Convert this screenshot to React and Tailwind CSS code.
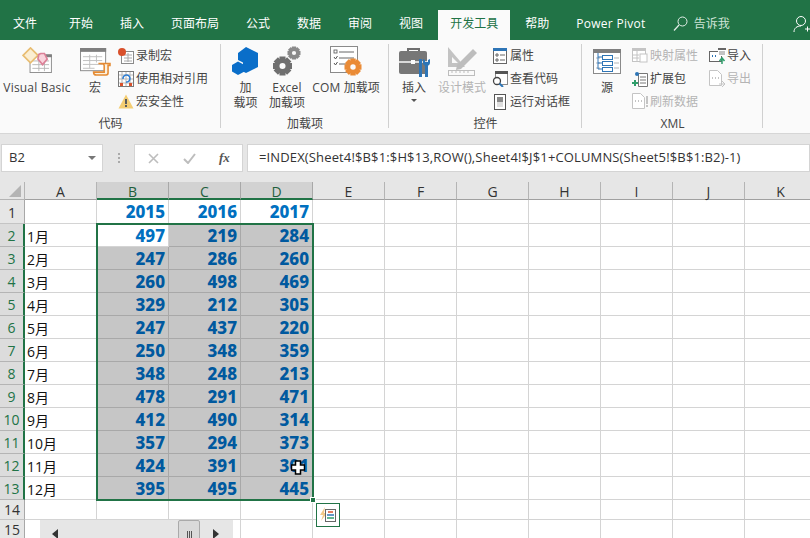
const FONT = "font-['Open_Sans','Noto_Sans_CJK_SC',sans-serif]"

const tabs = ['开始', '插入', '页面布局', '公式', '数据', '审阅', '视图']
const columns = ['A', 'B', 'C', 'D', 'E', 'F', 'G', 'H', 'I', 'J', 'K']
const months = ['1月', '2月', '3月', '4月', '5月', '6月', '7月', '8月', '9月', '10月', '11月', '12月']
const data = [
  [497, 219, 284], [247, 286, 260], [260, 498, 469], [329, 212, 305],
  [247, 437, 220], [250, 348, 359], [348, 248, 213], [478, 291, 471],
  [412, 490, 314], [357, 294, 373], [424, 391, 301], [395, 495, 445],
]

function VbaIcon() {
  return (
    <svg className="mb-[3px]" width="30" height="26" viewBox="0 0 32 28">
      <rect x="8.5" y="8.5" width="23" height="19" fill="#fff" stroke="#8a8a8a" />
      <path d="M8 8h24v3H8z" fill="#7f7f7f" />
      <path d="M11 15h18M11 19h18M11 23h18M18 12v14M24 12v14" stroke="#b5b5b5" />
      <path d="M1 9l8-8 8 8-8 8z" fill="#fbeed2" stroke="#e8bd72" strokeWidth="1.8" />
      <path d="M18 8l-1 5 5 6 5-6-3-6h-4z" fill="#f9d3dc" stroke="#dc8198" strokeWidth="1.8" />
    </svg>
  )
}

function MacroIcon() {
  return (
    <svg width="31" height="28" viewBox="0 0 32 29">
      <rect x="0.5" y="0.5" width="26" height="23" fill="#fff" stroke="#8a8a8a" />
      <rect x="0" y="0" width="27" height="4" fill="#7f7f7f" />
      <path d="M3 9h20M3 13h20M3 17h20M3 21h12M10 7v14M17 7v8" stroke="#c0c0c0" />
      <path d="M19 16h12v2h-2v8c0 1-1 2-2 2H17c-2 0-3-1-3-3h11v-7c0-1-2-2-6-2z" fill="#fbf1df" stroke="#e58a32" strokeWidth="1.600" />
    </svg>
  )
}

function RecordIcon() {
  return (
    <svg width="16" height="16" viewBox="0 0 16 16">
      <rect x="3.5" y="3.5" width="12" height="12" fill="#fff" stroke="#8a8a8a" />
      <path d="M6 7h8M6 10h8M6 13h8M10 5v9" stroke="#aaa" />
      <circle cx="4" cy="4" r="4" fill="#d9512c" />
    </svg>
  )
}

function RelativeIcon() {
  return (
    <svg width="16" height="16" viewBox="0 0 16 16">
      <rect x="0.5" y="0.5" width="15" height="15" fill="#fff" stroke="#7a7a7a" />
      <path d="M1 4h14M1 8h14M1 12h14M4 1v14M8 1v14M12 1v14" stroke="#b5b5b5" />
      <path d="M2 12h3v3H2zM11 12h3v3h-3z" fill="#d9512c" />
      <path d="M5 8a3.5 3.5 0 1 1 3 3" fill="none" stroke="#2b7cd3" strokeWidth="1.5" />
    </svg>
  )
}

function WarnIcon() {
  return (
    <svg width="16" height="15" viewBox="0 0 16 15">
      <path d="M8 0.5l7.5 14H0.5z" fill="#f4cd72" />
      <path d="M7 5h2v5H7zM7 11h2v2H7z" fill="#5c5c5c" />
    </svg>
  )
}

function CubeIcon() {
  return (
    <svg className="mb-px" width="27" height="28" viewBox="0 0 27 28">
      <path d="M14 0l12 6v14l-12 6-3-1.500v-9l-5-2.500V6z" fill="#0a6ec9" />
      <path d="M6 14.500l6.500 3.500v6.500L6 28 0 24.500V18z" fill="#0a6ec9" />
    </svg>
  )
}

function Gear({ x, y, r, color = '#6f6f6f' }) {
  const teeth = [0, 45, 90, 135].map((a) => (
    <rect key={a} x={x - r * 0.32} y={y - r} width={r * 0.64} height={r * 2} fill={color} transform={`rotate(${a} ${x} ${y})`} />
  ))
  return (
    <g>
      {teeth}
      <circle cx={x} cy={y} r={r * 0.74} fill={color} />
      <circle cx={x} cy={y} r={r * 0.32} fill="#fafafa" />
    </g>
  )
}

function GearsIcon() {
  return (
    <svg width="28" height="30" viewBox="0 0 28 30">
      <Gear x={9.500} y={20} r={9.500} />
      <Gear x={21} y={7} r={6.500} color="#8a8a8a" />
    </svg>
  )
}

function ComIcon() {
  return (
    <svg width="32" height="30" viewBox="0 0 32 30">
      <rect x="0.5" y="0.5" width="27" height="26" fill="#fff" stroke="#8a8a8a" />
      <path d="M9 6h15M9 12h15M9 18h8" stroke="#666" />
      <rect x="4" y="4" width="3" height="3" fill="none" stroke="#555" strokeWidth="0.8" />
      <path d="M4 11l1.500 2 2-3M4 17l1.500 2 2-3" fill="none" stroke="#555" />
      <Gear x={23} y={21} r={8.500} color="#ea8b36" />
    </svg>
  )
}

function ToolboxIcon() {
  return (
    <svg className="-mb-[2px]" width="31" height="31" viewBox="0 0 31 31">
      <path d="M9 5V2h11v3" fill="none" stroke="#6f6f6f" strokeWidth="2" />
      <rect x="0" y="4" width="28" height="23" rx="2" fill="#777" />
      <path d="M0 15h28" stroke="#fafafa" strokeWidth="1.500" />
      <rect x="12" y="13" width="4" height="4" fill="#fafafa" />
      <path d="M20 17h3v13h-3z" fill="#2e75b6" />
      <path d="M26 18h3v12h-3z" fill="#2e75b6" />
      <path d="M24 12v4c0 2 2 3 3.500 3s3.500-1 3.500-3v-4l-2 1v2h-3v-2z" fill="#2e75b6" />
      <path d="M20 12h3v6h-3z" fill="#2e75b6" />
    </svg>
  )
}

function DesignIcon() {
  return (
    <svg width="31" height="29" viewBox="0 0 31 29">
      <path d="M1 0l17 20H1zM5 10v6h6z" fill="#c3c3c3" fillRule="evenodd" />
      <path d="M10 18L26 2l4 4-16 16-5 1z" fill="#bdbdbd" />
      <rect x="1.500" y="23.500" width="26" height="5" fill="none" stroke="#bdbdbd" />
      <path d="M5 24v2M9 24v2M13 24v2M17 24v2M21 24v2" stroke="#bdbdbd" />
    </svg>
  )
}

function PropsIcon() {
  return (
    <svg width="16" height="16" viewBox="0 0 16 16">
      <rect x="1.500" y="0.5" width="13" height="15" fill="#fff" stroke="#666" />
      <rect x="1" y="0" width="14" height="3" fill="#2e75b6" />
      <path d="M4 6h2v2H4zM4 11h2v2H4z" fill="none" stroke="#666" />
      <path d="M8 7h5M8 12h5" stroke="#666" />
    </svg>
  )
}

function CodeIcon() {
  return (
    <svg width="16" height="16" viewBox="0 0 16 16">
      <rect x="3.500" y="0.5" width="12" height="13" fill="#fff" stroke="#8a8a8a" />
      <rect x="3" y="0" width="13" height="3" fill="#555" />
      <circle cx="5" cy="10" r="3.500" fill="#fff" stroke="#444" strokeWidth="1.300" />
      <path d="M7.500 12.500L11 16" stroke="#2e75b6" strokeWidth="2" />
    </svg>
  )
}

function DialogIcon() {
  return (
    <svg width="16" height="16" viewBox="0 0 16 16">
      <rect x="2.500" y="0.500" width="11" height="15" fill="#fff" stroke="#555" />
      <rect x="5" y="3" width="6" height="5" fill="#888" />
      <rect x="5" y="8" width="6" height="5" fill="#ddd" />
    </svg>
  )
}

function SourceIcon() {
  return (
    <svg className="mb-[2px]" width="28" height="25" viewBox="0 0 28 25">
      <rect x="0.5" y="0.5" width="27" height="24" fill="#fff" stroke="#8a8a8a" />
      <rect x="0" y="0" width="28" height="4" fill="#7f7f7f" />
      <path d="M3 9h4M3 14h4M3 19h4M21 9h5M21 14h5M21 19h5" stroke="#b5b5b5" />
      <path d="M5 4v16h4M5 8h4M5 14h4" fill="none" stroke="#2e75b6" />
      <rect x="9.500" y="6.500" width="10" height="4" fill="#fff" stroke="#2e75b6" />
      <rect x="9.500" y="12.500" width="10" height="4" fill="#fff" stroke="#2e75b6" />
      <rect x="9.500" y="18.500" width="10" height="4" fill="#fff" stroke="#2e75b6" />
    </svg>
  )
}

function MapIcon() {
  return (
    <svg width="16" height="15" viewBox="0 0 16 15">
      <rect x="0.500" y="0.500" width="13" height="13" fill="#fff" stroke="#c4c4c4" />
      <rect x="0" y="0" width="14" height="3" fill="#c4c4c4" />
      <path d="M1 7h6M1 10h6M5 3v10" stroke="#c4c4c4" />
      <rect x="8" y="6" width="7" height="8" fill="#fff" stroke="#c4c4c4" />
    </svg>
  )
}

function ExpandIcon() {
  return (
    <svg width="16" height="16" viewBox="0 0 16 16">
      <path d="M6.500 2.500h9v13h-9z" fill="#fff" stroke="#777" />
      <path d="M8 6h6M8 9h6M8 12h6" stroke="#777" />
      <circle cx="5" cy="3" r="2" fill="#2e75b6" />
      <path d="M0 12h6M3 9v6" stroke="#2f9e6b" strokeWidth="2" />
    </svg>
  )
}

function XmlDoc({ color = '#c4c4c4', bang, arrow }) {
  return (
    <svg width="18" height="17" viewBox="0 0 18 17">
      <path d="M1.500 0.500h8l4 4v11h-12z" fill="#fff" stroke={color} />
      <path d="M4 8h1M7 8h1M10 8h1" stroke={color} strokeWidth="2" />
      {bang && <path d="M15 3h2v8h-2zM15 12h2v2h-2z" fill={color} />}
      {arrow && <path d="M11 14h5M14 11l3 3-3 3" fill="none" stroke={color} />}
    </svg>
  )
}

function ImportIcon() {
  return (
    <svg width="17" height="16" viewBox="0 0 17 16">
      <rect x="0.500" y="3.500" width="12" height="10" fill="#fff" stroke="#666" />
      <path d="M9 0h8v8H9z" fill="#fff" />
      <path d="M9 0h8v2H9z" fill="#666" />
      <path d="M10 4h6M10 6h6" stroke="#888" />
      <path d="M3 8h1M6 8h1" stroke="#2e75b6" strokeWidth="2" />
      <path d="M13 16v-5M10.500 13l2.500-3 2.500 3" fill="none" stroke="#2f9e6b" strokeWidth="1.500" />
    </svg>
  )
}

function BigButton({ width, label, children, disabled, caret }) {
  return (
    <div className="flex flex-col items-center shrink-0" style={{ width }}>
      <div className="h-[33px] flex items-end justify-center">{children}</div>
      <div className={`mt-[4px] text-center leading-[15px] whitespace-pre ${disabled ? 'text-[#b4b4b4]' : ''}`}>{label}</div>
      {caret && <div className="mt-[4px] w-0 h-0 border-x-[3px] border-x-transparent border-t-[3px] border-t-[#555]" />}
    </div>
  )
}

function SmallRow({ icon, label, disabled }) {
  return (
    <div className="h-[23px] flex items-center whitespace-nowrap">
      <div className="w-[18px] flex justify-center shrink-0">{icon}</div>
      <span className={`ml-[1px] ${disabled ? 'text-[#b4b4b4]' : ''}`}>{label}</span>
    </div>
  )
}

function Group({ width, label, children }) {
  return (
    <div className="relative h-full flex flex-col shrink-0" style={{ width }}>
      <div className="flex h-[74px] pt-[3px]">{children}</div>
      <div className="text-center leading-[16px] mt-[2px]">{label}</div>
      <div className="absolute right-0 top-[4px] h-[84px] w-px bg-[#d0d0d0]" />
    </div>
  )
}

function Ribbon() {
  return (
    <div className="h-[94px] bg-[#fafafa] border-b border-[#d6d6d6] flex text-[12px] text-[#444]">
      <Group width={221} label="代码">
        <BigButton width={74} label={<span className="tracking-[0.2px]">Visual Basic</span>}><VbaIcon /></BigButton>
        <BigButton width={42} label="宏"><MacroIcon /></BigButton>
        <div className="flex flex-col ml-[1px] pt-[1px]">
          <SmallRow icon={<RecordIcon />} label="录制宏" />
          <SmallRow icon={<RelativeIcon />} label="使用相对引用" />
          <SmallRow icon={<WarnIcon />} label="宏安全性" />
        </div>
      </Group>
      <Group width={168} label="加载项">
        <div className="w-[1px]" />
        <BigButton width={47} label={'加\n载项'}><CubeIcon /></BigButton>
        <BigButton width={36} label={<><span className="tracking-[0.2px]">Excel</span>{'\n加载项'}</>}><GearsIcon /></BigButton>
        <div className="w-[5px]" />
        <BigButton width={72} label={<><span className="tracking-[0.2px]">COM</span> 加载项</>}><ComIcon /></BigButton>
      </Group>
      <Group width={193} label="控件">
        <div className="w-[7px]" />
        <BigButton width={36} label="插入" caret><ToolboxIcon /></BigButton>
        <div className="w-[6px]" />
        <BigButton width={48} label="设计模式" disabled><DesignIcon /></BigButton>
        <div className="flex flex-col ml-[5px] pt-[1px]">
          <SmallRow icon={<PropsIcon />} label="属性" />
          <SmallRow icon={<CodeIcon />} label="查看代码" />
          <SmallRow icon={<DialogIcon />} label="运行对话框" />
        </div>
      </Group>
      <Group width={181} label="XML">
        <div className="w-[7px]" />
        <BigButton width={36} label="源"><SourceIcon /></BigButton>
        <div className="flex flex-col ml-[6px] pt-[1px]">
          <SmallRow icon={<MapIcon />} label="映射属性" disabled />
          <SmallRow icon={<ExpandIcon />} label="扩展包" />
          <SmallRow icon={<XmlDoc bang />} label="刷新数据" disabled />
        </div>
        <div className="flex flex-col ml-[10px] pt-[1px]">
          <SmallRow icon={<ImportIcon />} label="导入" />
          <SmallRow icon={<XmlDoc arrow />} label="导出" disabled />
        </div>
      </Group>
    </div>
  )
}

function FormulaBar() {
  return (
    <div className="h-[48px] bg-[#e6e6e6] flex items-start pt-[10px] pl-[1px] text-[13px] text-[#333]">
      <div className="w-[102px] h-[28px] bg-white border border-[#d4d4d4] flex items-center justify-between pl-[7px] pr-[6px]">
        <span>B2</span>
        <div className="w-0 h-0 border-x-[4px] border-x-transparent border-t-[4px] border-t-[#777]" />
      </div>
      <div className="w-[31px] h-[28px] flex flex-col items-center justify-center gap-[2px]">
        <i className="w-[2px] h-[2px] bg-[#aaa]" />
        <i className="w-[2px] h-[2px] bg-[#aaa]" />
        <i className="w-[2px] h-[2px] bg-[#aaa]" />
      </div>
      <div className="w-[109px] h-[28px] bg-white border border-[#d4d4d4] flex items-center text-[#bbb]">
        <svg className="ml-[13px]" width="11" height="11" viewBox="0 0 11 11"><path d="M1 1l9 9M10 1l-9 9" stroke="#bdbdbd" strokeWidth="1.600" /></svg>
        <svg className="ml-[24px]" width="13" height="11" viewBox="0 0 13 11"><path d="M1 6l4 4 7-9" fill="none" stroke="#bdbdbd" strokeWidth="2" /></svg>
        <span className="ml-[23px] text-[#555] font-['Liberation_Serif',serif] italic font-bold text-[13px]">fx</span>
      </div>
      <div className="w-[4px]" />
      <div className="flex-1 h-[28px] bg-white border border-[#d4d4d4] flex items-center pl-[11px] pb-px whitespace-nowrap tracking-[0.14px]">
        =INDEX(Sheet4!$B$1:$H$13,ROW(),Sheet4!$J$1+COLUMNS(Sheet5!$B$1:B2)-1)
      </div>
    </div>
  )
}

function Grid() {
  const isSel = (c) => c === 'B' || c === 'C' || c === 'D'
  return (
    <div className="grid grid-cols-[25px_repeat(11,72px)] grid-rows-[18px_24px_repeat(12,23px)_20px_20px] bg-white">
      <div className="bg-[#e6e6e6] border-r border-b border-[#b4b4b4] relative">
        <div className="absolute right-[3px] bottom-[2px] w-0 h-0 border-l-[12px] border-l-transparent border-b-[12px] border-b-[#b4b4b4]" />
      </div>
      {columns.map((c) => (
        <div
          key={c}
          className={`border-r text-[14px] leading-[19px] text-center ${isSel(c) ? 'bg-[#d2d2d2] border-[#a8a8a8] border-b-2 border-b-[#217346] text-[#1f5f3c]' : 'bg-[#e6e6e6] border-[#b4b4b4] border-b border-b-[#a0a0a0] text-[#333]'}`}
        >
          {c}
        </div>
      ))}

      {Array.from({ length: 15 }, (_, i) => {
        const row = i + 1
        const inSel = row >= 2 && row <= 13
        return [
          <div
            key={`h${row}`}
            className={`text-[14px] text-center border-b ${row > 13 ? 'leading-[19px]' : row === 1 ? 'leading-[25px]' : 'leading-[24px]'} ${inSel ? 'bg-[#dcdcdc] border-[#b4b4b4] border-r-2 border-r-[#217346] text-[#217346]' : 'bg-[#e6e6e6] border-[#c4c4c4] border-r border-r-[#a8a8a8] text-[#333]'}`}
          >
            {row}
          </div>,
          ...columns.map((c, ci) => {
            const key = `${c}${row}`
            if (ci >= 1 && ci <= 3 && row === 1) {
              return (
                <div key={key} className="border-r border-b border-[#d4d4d4] text-right pr-[3px] font-['Noto_Sans',sans-serif] font-extrabold text-[17px] leading-[24px] text-[#0070c0]">
                  {2014 + ci}
                </div>
              )
            }
            if (ci >= 1 && ci <= 3 && inSel) {
              const first = ci === 1 && row === 2
              return (
                <div key={key} className={`border-r border-b text-right pr-[3px] font-['Noto_Sans',sans-serif] font-extrabold text-[17px] leading-[24px] ${first ? 'bg-white border-[#d4d4d4] text-[#0070c0]' : 'bg-[#c6c6c6] border-[#a8a8a8] text-[#00599f]'}`}>
                  {data[row - 2][ci - 1]}
                </div>
              )
            }
            if (ci === 0 && inSel) {
              return (
                <div key={key} className="border-r border-b border-[#d4d4d4] pl-[2px] text-[14px] leading-[26px] text-[#111]">
                  {months[row - 2]}
                </div>
              )
            }
            return <div key={key} className="border-r border-b border-[#d4d4d4]" />
          }),
        ]
      })}
    </div>
  )
}

export default function App() {
  return (
    <div className={`relative w-[810px] h-[538px] overflow-hidden bg-white ${FONT}`}>
      <div className="h-[40px] bg-[#217346] flex items-end text-[12px] text-white relative">
        <div className="h-[30px] pl-[13px] pr-[18.5px] leading-[28px]">文件</div>
        {tabs.map((t) => (
          <div key={t} className="h-[30px] px-[13.5px] leading-[28px]">{t}</div>
        ))}
        <div className="h-[30px] ml-[1.5px] px-[12px] leading-[28px] bg-[#fafafa] text-[#217346]">开发工具</div>
        <div className="h-[30px] ml-[1.5px] px-[13.5px] leading-[28px]">帮助</div>
        <div className="h-[30px] px-[13.5px] leading-[28px] tracking-[0.3px]">Power Pivot</div>
        <svg className="ml-[13.5px] mb-[9px]" width="15" height="15" viewBox="0 0 15 15">
          <circle cx="9.500" cy="5.500" r="4.500" fill="none" stroke="#e4efe9" />
          <path d="M6 9l-5 5.500" stroke="#e4efe9" strokeWidth="1.200" />
        </svg>
        <div className="ml-[6px] h-[30px] leading-[28px] text-[#cfe3d7]">告诉我</div>
        <svg className="absolute left-[793px] top-[16px]" width="17" height="17" viewBox="0 0 17 17">
          <circle cx="8" cy="5" r="4.500" fill="none" stroke="#fff" />
          <path d="M1 16c0-4 3-6 7-6M12 13h5M14.500 10.500v5" fill="none" stroke="#fff" />
        </svg>
      </div>
      <Ribbon />
      <FormulaBar />
      <Grid />

      {/* selection outline and fill handle */}
      <div className="absolute left-[96px] top-[223px] w-[218px] h-[278px] border-2 border-[#217346]" />
      <div className="absolute left-[310px] top-[497px] w-[6px] h-[6px] bg-[#217346] border border-white" />

      {/* quick analysis button */}
      <div className="absolute left-[316px] top-[503px] w-[24px] h-[24px] bg-white border border-[#217346] flex items-center justify-center">
        <svg width="16" height="16" viewBox="0 0 16 16">
          <path d="M5 0L0 8h3l-2 6 6-8H4z" fill="#f2c98a" />
          <rect x="5.500" y="2.500" width="10" height="12" fill="#fff" stroke="#666" />
          <path d="M8 5h5" stroke="#d9512c" strokeWidth="1.500" />
          <path d="M7 8h7" stroke="#2e75b6" strokeWidth="1.500" />
          <path d="M7 11h7" stroke="#2f9e6b" strokeWidth="1.500" />
        </svg>
      </div>

      {/* sheet scrollbar, runs past the bottom of the window */}
      <div className="absolute left-[40px] top-[520px] w-[193px] h-[28px] bg-[#e6e6e6] flex items-center">
        <div className="ml-[12px] w-0 h-0 border-y-[5px] border-y-transparent border-r-[6px] border-r-[#333]" />
        <div className="ml-[120px] w-[22px] h-[28px] bg-[#dadada] border border-[#aaa] rounded-t-[2px] flex items-center justify-center gap-[1px]">
          <i className="w-px h-[7px] bg-[#555]" />
          <i className="w-px h-[7px] bg-[#555]" />
          <i className="w-px h-[7px] bg-[#555]" />
        </div>
        <div className="ml-[13px] w-0 h-0 border-y-[5px] border-y-transparent border-l-[6px] border-l-[#333]" />
      </div>

      {/* mouse cursor */}
      <svg className="absolute left-[291px] top-[460px]" width="14" height="15" viewBox="0 0 14 15">
        <path d="M4.500 1h5v4h4v5h-4v4h-5v-4h-4V5h4z" fill="#fff" stroke="#000" strokeWidth="1.500" />
      </svg>
    </div>
  )
}
